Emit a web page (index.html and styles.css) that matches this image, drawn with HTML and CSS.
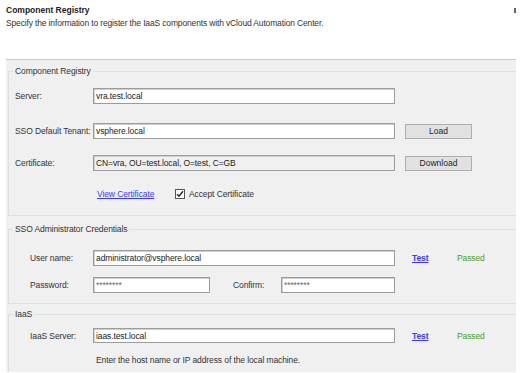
FILE: index.html
```html
<!DOCTYPE html>
<html lang="en">
<head>
    <meta charset="UTF-8">
    <meta name="viewport" content="width=device-width, initial-scale=1.0">
    <title>Component Registry</title>
    <link rel="stylesheet" href="styles.css">
</head>
<body>
    <div class="header">
        <div class="header-text">
            <div class="title">Component Registry</div>
            <div class="subtitle">Specify the information to register the IaaS components with vCloud Automation Center.</div>
        </div>
        <span class="corner-mark"></span>
    </div>

    <div class="panel">
        <fieldset class="group group-registry">
            <legend>Component Registry</legend>
            <div class="row row-server">
                <label class="field-label">Server:</label>
                <input class="text-field" type="text" value="vra.test.local">
            </div>
            <div class="row row-tenant">
                <label class="field-label">SSO Default Tenant:</label>
                <input class="text-field" type="text" value="vsphere.local">
                <button class="btn">Load</button>
            </div>
            <div class="row row-cert">
                <label class="field-label">Certificate:</label>
                <input class="text-field readonly" type="text" value="CN=vra, OU=test.local, O=test, C=GB" readonly>
                <button class="btn">Download</button>
            </div>
            <div class="row row-accept">
                <span class="cert-link-cell"><a href="#" class="link">View Certificate</a></span>
                <span class="checkbox">
                    <svg width="8" height="8" viewBox="0 0 8 8"><path d="M1 4.2 L3 6.3 L7 1.2" fill="none" stroke="#222" stroke-width="1.4"/></svg>
                </span>
                <span class="check-label">Accept Certificate</span>
            </div>
        </fieldset>

        <fieldset class="group group-sso">
            <legend>SSO Administrator Credentials</legend>
            <div class="row row-user">
                <label class="field-label indent">User name:</label>
                <input class="text-field" type="text" value="administrator@vsphere.local">
                <span class="test-cell"><a href="#" class="link test-link">Test</a></span>
                <span class="status">Passed</span>
            </div>
            <div class="row row-password">
                <label class="field-label indent">Password:</label>
                <input class="text-field pw-field" type="text" value="********">
                <label class="confirm-label">Confirm:</label>
                <input class="text-field pw-confirm" type="text" value="********">
            </div>
        </fieldset>

        <fieldset class="group group-iaas">
            <legend>IaaS</legend>
            <div class="row row-iaas">
                <label class="field-label indent">IaaS Server:</label>
                <input class="text-field" type="text" value="iaas.test.local">
                <span class="test-cell"><a href="#" class="link test-link">Test</a></span>
                <span class="status">Passed</span>
            </div>
            <div class="hint">Enter the host name or IP address of the local machine.</div>
        </fieldset>
    </div>
</body>
</html>
```

FILE: styles.css
```css
html, body {
    margin: 0;
    height: 100%;
}
body {
    font-family: "Liberation Sans", Arial, sans-serif;
    font-size: 8.5px;
    letter-spacing: -0.1px;
    color: #333;
    background-color: #fff;
    overflow: hidden;
}
.header {
    display: flex;
    justify-content: space-between;
    height: 59px;
    padding: 4px 4px 0 6px;
    box-sizing: border-box;
}
.title {
    font-weight: bold;
    color: #222;
    line-height: 13px;
    letter-spacing: 0;
}
.subtitle {
    color: #333;
    line-height: 13px;
    letter-spacing: -0.15px;
}
.corner-mark {
    width: 2px;
    height: 5px;
    margin-top: 4px;
    background-color: #666;
}
.panel {
    margin-left: 6px;
    width: 510px;
    height: calc(100% - 60px);
    border-top: 1px solid #c9c9c9;
    background-color: #f0f0f0;
    padding-left: 2px;
    box-sizing: border-box;
    overflow: hidden;
}
.group {
    margin: 0 -6px 0 0;
    padding: 0 0 0 6px;
    border: 1px solid #d9e1e8;
    min-width: 0;
}
.group legend {
    margin-left: -2px;
    padding: 0 2px;
    line-height: 12px;
    color: #333;
}
.group-registry {
    margin-top: 5px;
    padding-bottom: 15px;
}
.group-sso {
    margin-top: 7px;
    padding-bottom: 10px;
}
.group-iaas {
    margin-top: 4px;
    padding-bottom: 7px;
}
.row {
    display: flex;
    align-items: center;
    height: 16px;
}
.row-server { margin-top: 11px; }
.row-tenant { margin-top: 19px; }
.row-cert { margin-top: 16px; }
.row-accept { margin-top: 17px; height: 12px; }
.row-user { margin-top: 15px; }
.row-password { margin-top: 11px; }
.row-iaas { margin-top: 8px; height: 15px; }
.field-label {
    width: 78px;
    flex-shrink: 0;
    box-sizing: border-box;
}
.field-label.indent {
    padding-left: 15px;
}
.text-field {
    width: 302px;
    height: 100%;
    box-sizing: border-box;
    margin: 0;
    padding: 0 2px;
    border: 1px solid #9c9c9c;
    box-shadow: inset 1px 1px 0 #cfcfcf;
    background-color: #fff;
    font-family: inherit;
    font-size: 8.5px;
    letter-spacing: -0.1px;
    color: #222;
    outline: none;
}
.text-field.readonly {
    background-color: #f0f0f0;
}
.pw-field {
    width: 117px;
    color: #666;
}
.pw-confirm {
    width: 114px;
    color: #666;
}
.confirm-label {
    margin-left: 23px;
    width: 48px;
}
.btn {
    margin: 0 0 0 10px;
    width: 67px;
    height: 15px;
    padding: 0;
    border: 1px solid #adadad;
    background-color: #e1e1e1;
    font-family: inherit;
    font-size: 8.5px;
    color: #222;
}
.cert-link-cell {
    margin-left: 82px;
    width: 78px;
}
.link {
    color: #3a3aff;
    text-decoration: underline;
}
.checkbox {
    width: 10px;
    height: 10px;
    box-sizing: border-box;
    border: 1px solid #555;
    background-color: #fff;
    display: flex;
    align-items: center;
    justify-content: center;
}
.check-label {
    margin-left: 4px;
}
.test-cell {
    margin-left: 17px;
    width: 45px;
}
.test-link {
    font-weight: bold;
}
.status {
    color: #4c9a2e;
}
.hint {
    margin: 12px 0 0 81px;
    line-height: 10px;
}
```
